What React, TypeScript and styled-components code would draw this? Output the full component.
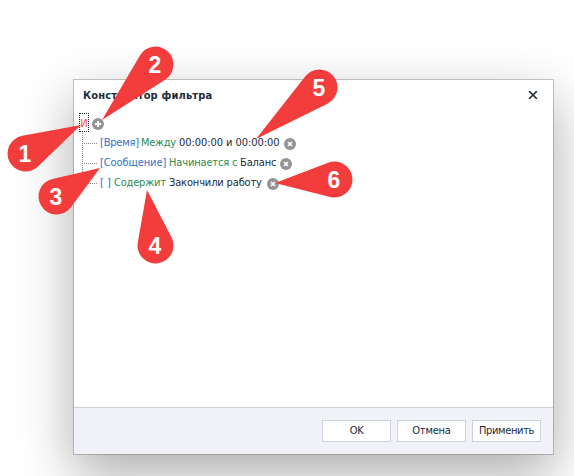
import React from "react";
import styled, { createGlobalStyle } from "styled-components";

const GlobalStyle = createGlobalStyle`
  * { box-sizing: border-box; }
  body { margin: 0; background: #fff; overflow: hidden; }
`;

const Page = styled.main`
  position: relative;
  width: 574px;
  height: 476px;
  padding: 79px 20px 21px 73px;
  overflow: hidden;
  font-family: "DejaVu Sans Condensed", "DejaVu Sans", sans-serif;
  font-stretch: condensed;
  font-size: 11px;
  color: #202c3a;
`;

const Dialog = styled.section`
  display: flex;
  flex-direction: column;
  width: 481px;
  height: 376px;
  background: #fff;
  border: 1px solid rgba(100, 100, 100, 0.36);
  background-clip: padding-box;
  box-shadow: 0 20px 50px rgba(0, 0, 0, 0.32);
`;

const Header = styled.header`
  display: flex;
  justify-content: space-between;
  align-items: center;
  height: 31px;
  padding: 0 15px 0 9px;
`;

const Title = styled.h1`
  margin: 0;
  font-size: 11px;
  line-height: 16px;
  letter-spacing: 0.15px;
  white-space: nowrap;
`;

const CloseButton = styled.button`
  display: flex;
  margin-bottom: 1px;
  padding: 0;
  border: 0;
  background: none;
`;

const Tree = styled.div`
  flex: 1;
  padding: 2px 0 0 5px;
`;

const Root = styled.div`
  display: flex;
  align-items: flex-start;
  gap: 3px;
  height: 20px;
`;

const GroupOperator = styled.span`
  display: flex;
  justify-content: center;
  width: 10px;
  height: 19px;
  border: 1px dotted #1f2933;
  color: #f4483e;
  line-height: 19px;
`;

const IconSlot = styled.span<{ $top: number }>`
  display: flex;
  margin-top: ${(p) => p.$top}px;
`;

const Conditions = styled.ul`
  width: 300px;
  margin: 0 0 0 3px;
  padding: 0;
  list-style: none;
`;

const Condition = styled.li<{ $last?: boolean }>`
  display: flex;
  align-items: center;
  height: 20px;
  background:
    repeating-linear-gradient(90deg, #888 0 1px, transparent 1px 2px) 0 10px / 16px 1px no-repeat,
    repeating-linear-gradient(180deg, #888 0 1px, transparent 1px 2px) 0 0 / 1px
      ${(p) => (p.$last ? "10px" : "20px")} no-repeat;
  padding-left: 18px;
`;

const colors = { field: "#3470c4", operator: "#30894f", value: "#202c3a" };

const Token = styled.span<{ $kind: keyof typeof colors; $width: number; $spacing?: number }>`
  flex: none;
  width: ${(p) => p.$width}px;
  color: ${(p) => colors[p.$kind]};
  letter-spacing: ${(p) => p.$spacing ?? 0}px;
  line-height: 18px;
  white-space: nowrap;
`;

const Footer = styled.footer`
  display: flex;
  justify-content: flex-end;
  gap: 6px;
  height: 47px;
  padding: 12px 12px 0;
  border-top: 1px solid #cdd1d8;
  background: #f0f2f7;
`;

const Button = styled.button<{ $spacing?: number }>`
  width: 69px;
  height: 22px;
  padding: 0;
  border: 1px solid #ccd1da;
  background: #fff;
  color: #202c3a;
  font: inherit;
  line-height: 20px;
  letter-spacing: ${(p) => p.$spacing ?? 0}px;
  text-align: center;
`;

const Annotations = styled.svg`
  position: absolute;
  inset: 0;
  pointer-events: none;
`;

function RoundIcon({ remove = false }: { remove?: boolean }) {
  return (
    <IconSlot $top={remove ? 2 : 5}>
      <svg width="12" height="12" viewBox="0 0 12 12">
        <circle cx="6" cy="6" r="6" fill="#949494" />
        <path
          d={remove ? "M4 4l4 4M8 4L4 8" : "M6 3v6M3 6h6"}
          stroke="#fff"
          strokeWidth={remove ? 1.7 : 2}
        />
      </svg>
    </IconSlot>
  );
}

type Point = [number, number];

/* A round numbered head whose tangents meet at the tip. */
function Marker({ label, center, tip }: { label: string; center: Point; tip: Point }) {
  const r = 18;
  const [cx, cy] = center;
  const dx = tip[0] - cx;
  const dy = tip[1] - cy;
  const spread = Math.acos(r / Math.hypot(dx, dy));
  const angle = Math.atan2(dy, dx);
  const at = (a: number) => `${cx + r * Math.cos(a)} ${cy + r * Math.sin(a)}`;
  return (
    <g>
      <path
        d={`M${tip.join(" ")}L${at(angle + spread)}A${r} ${r} 0 1 1 ${at(angle - spread)}Z`}
        fill="#f33c3c"
      />
      <text
        x={cx - 0.5}
        y={cy + 8}
        fill="#fff"
        fontFamily="Liberation Sans, sans-serif"
        fontSize="23"
        fontWeight="700"
        textAnchor="middle"
      >
        {label}
      </text>
    </g>
  );
}

const markers: { label: string; center: Point; tip: Point }[] = [
  { label: "1", center: [25.5, 153.5], tip: [81, 125] },
  { label: "2", center: [155.5, 64.5], tip: [102, 120] },
  { label: "3", center: [56.5, 196.5], tip: [100, 168] },
  { label: "4", center: [155.5, 245.5], tip: [147, 190] },
  { label: "5", center: [319.5, 87.5], tip: [256, 139] },
  { label: "6", center: [334.5, 179.5], tip: [275, 183] },
];

export default function App() {
  return (
    <Page>
      <GlobalStyle />
      <Dialog role="dialog">
        <Header>
          <Title>Конструктор фильтра</Title>
          <CloseButton aria-label="Закрыть">
            <svg width="10" height="8" viewBox="0 0 10 8">
              <path d="M1 0l8 8M9 0L1 8" stroke="#293440" strokeWidth="1.7" />
            </svg>
          </CloseButton>
        </Header>
        <Tree>
          <Root>
            <GroupOperator>И</GroupOperator>
            <RoundIcon />
          </Root>
          <Conditions>
            <Condition>
              <Token $kind="field" $width={41} $spacing={-0.2}>[Время]</Token>
              <Token $kind="operator" $width={38} $spacing={-0.3}>Между</Token>
              <Token $kind="value" $width={105} $spacing={-0.06}>00:00:00 и 00:00:00</Token>
              <RoundIcon remove />
            </Condition>
            <Condition>
              <Token $kind="field" $width={69} $spacing={-0.1}>[Сообщение]</Token>
              <Token $kind="operator" $width={71} $spacing={-0.15}>Начинается с</Token>
              <Token $kind="value" $width={40} $spacing={-0.15}>Баланс</Token>
              <RoundIcon remove />
            </Condition>
            <Condition $last>
              <Token $kind="field" $width={14}>[ ]</Token>
              <Token $kind="operator" $width={55} $spacing={-0.2}>Содержит</Token>
              <Token $kind="value" $width={98} $spacing={-0.15}>Закончили работу</Token>
              <RoundIcon remove />
            </Condition>
          </Conditions>
        </Tree>
        <Footer>
          <Button $spacing={-0.5}>OK</Button>
          <Button $spacing={-0.2}>Отмена</Button>
          <Button $spacing={-0.35}>Применить</Button>
        </Footer>
      </Dialog>
      <Annotations width="574" height="476" viewBox="0 0 574 476">
        {markers.map((m) => (
          <Marker key={m.label} {...m} />
        ))}
      </Annotations>
    </Page>
  );
}
